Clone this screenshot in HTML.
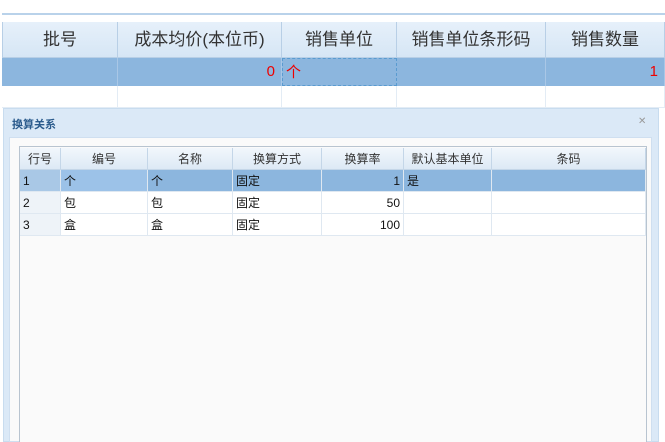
<!DOCTYPE html>
<html><head><meta charset="utf-8"><style>
*{margin:0;padding:0;box-sizing:border-box}
body{width:665px;height:442px;background:#fff;position:relative;overflow:hidden;font-family:"Liberation Sans","Noto Sans CJK SC",sans-serif}
.a{position:absolute}
.hd{top:22px;height:36px;background:linear-gradient(#e6f0fa,#d6e6f5);border-right:1px solid #b8cfe6;border-bottom:1px solid #b8cfe6;font-size:17px;color:#333;text-align:center;line-height:36px}
.r1{top:58px;height:28px;background:#8cb6de;border-right:1px solid #a9c7e6;font-size:15px;color:#e00;line-height:28px}
.r2{top:86px;height:22px;border-right:1px solid #e3ecf5;border-bottom:1px solid #e3ecf5}
.gh{top:148px;height:22px;background:linear-gradient(#f2f7fc,#dde9f5);border-right:1px solid #c4d6e8;border-bottom:1px solid #c4d6e8;font-size:12px;color:#333;text-align:center;line-height:22px}
.gc{height:22px;border-right:1px solid #dfe8f1;border-bottom:1px solid #dfe8f1;font-size:12px;color:#111;line-height:22px;padding:0 3px}
.sel{background:#8cb6de}
</style></head><body>
<div class="a" style="left:2px;top:13px;width:663px;height:2px;background:#b9d2ea"></div>
<div class="a hd" style="left:2px;width:116px;border-left:1px solid #b8cfe6">批号</div>
<div class="a hd" style="left:118px;width:164px">成本均价(本位币)</div>
<div class="a hd" style="left:282px;width:115px">销售单位</div>
<div class="a hd" style="left:397px;width:149px">销售单位条形码</div>
<div class="a hd" style="left:546px;width:119px">销售数量</div>
<div class="a r1" style="left:2px;width:116px"></div>
<div class="a r1" style="left:118px;width:164px;text-align:right;padding-right:6px">0</div>
<div class="a r1" style="left:282px;width:115px;padding-left:3px;border:1px dashed #5a9bd0">个</div>
<div class="a r1" style="left:397px;width:149px"></div>
<div class="a r1" style="left:546px;width:119px;text-align:right;padding-right:6px">1</div>
<div class="a r2" style="left:2px;width:116px"></div>
<div class="a r2" style="left:118px;width:164px"></div>
<div class="a r2" style="left:282px;width:115px"></div>
<div class="a r2" style="left:397px;width:149px"></div>
<div class="a r2" style="left:546px;width:119px"></div>
<!-- dialog -->
<div class="a" style="left:3px;top:108px;width:656px;height:334px;background:#dbe9f7;border:1px solid #c8dcef"></div>
<div class="a" style="left:12px;top:116px;font-size:11px;font-weight:bold;color:#2a5a8c">换算关系</div>
<div class="a" style="left:638px;top:116px;font-size:10px;color:#999">✕</div>
<div class="a" style="left:9px;top:137px;width:643px;height:305px;background:#fafafa;border:1px solid #cfdff0"></div>
<div class="a" style="left:19px;top:146px;width:628px;height:296px;background:#fafafa;border:1px solid #b8c4d0;border-bottom:none"></div>
<div class="a gh" style="left:20px;width:41px">行号</div>
<div class="a gh" style="left:61px;width:87px">编号</div>
<div class="a gh" style="left:148px;width:85px">名称</div>
<div class="a gh" style="left:233px;width:89px">换算方式</div>
<div class="a gh" style="left:322px;width:82px">换算率</div>
<div class="a gh" style="left:404px;width:88px">默认基本单位</div>
<div class="a gh" style="left:492px;width:154px">条码</div>

<div class="a gc sel" style="left:20px;top:170px;width:41px;background:#a9c8e6">1</div>
<div class="a gc sel" style="left:61px;top:170px;width:87px;background:#9cc2e8">个</div>
<div class="a gc sel" style="left:148px;top:170px;width:85px">个</div>
<div class="a gc sel" style="left:233px;top:170px;width:89px">固定</div>
<div class="a gc sel" style="left:322px;top:170px;width:82px;text-align:right">1</div>
<div class="a gc sel" style="left:404px;top:170px;width:88px">是</div>
<div class="a gc sel" style="left:492px;top:170px;width:154px"></div>

<div class="a gc" style="left:20px;top:192px;width:41px;background:#eef3f8">2</div>
<div class="a gc" style="left:61px;top:192px;width:87px;background:#fff">包</div>
<div class="a gc" style="left:148px;top:192px;width:85px;background:#fff">包</div>
<div class="a gc" style="left:233px;top:192px;width:89px;background:#fff">固定</div>
<div class="a gc" style="left:322px;top:192px;width:82px;background:#fff;text-align:right">50</div>
<div class="a gc" style="left:404px;top:192px;width:88px;background:#fff"></div>
<div class="a gc" style="left:492px;top:192px;width:154px;background:#fff"></div>

<div class="a gc" style="left:20px;top:214px;width:41px;background:#eef3f8">3</div>
<div class="a gc" style="left:61px;top:214px;width:87px;background:#fff">盒</div>
<div class="a gc" style="left:148px;top:214px;width:85px;background:#fff">盒</div>
<div class="a gc" style="left:233px;top:214px;width:89px;background:#fff">固定</div>
<div class="a gc" style="left:322px;top:214px;width:82px;background:#fff;text-align:right">100</div>
<div class="a gc" style="left:404px;top:214px;width:88px;background:#fff"></div>
<div class="a gc" style="left:492px;top:214px;width:154px;background:#fff"></div>
</body></html>
